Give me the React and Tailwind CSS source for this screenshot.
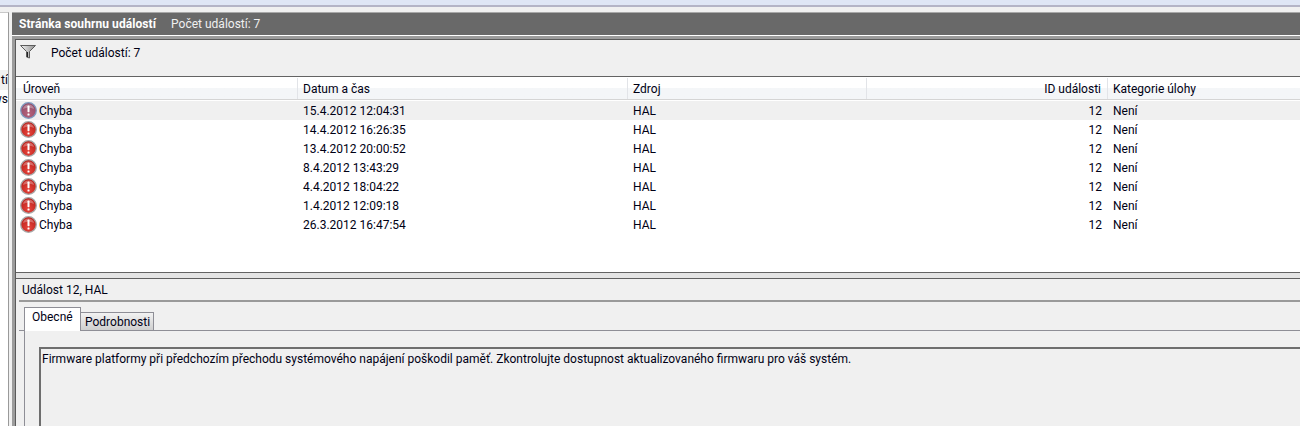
const font = { fontFamily: 'Roboto, "Noto Sans", sans-serif' };

const rows = [
  ["15.4.2012 12:04:31", true],
  ["14.4.2012 16:26:35"],
  ["13.4.2012 20:00:52"],
  ["8.4.2012 13:43:29"],
  ["4.4.2012 18:04:22"],
  ["1.4.2012 12:09:18"],
  ["26.3.2012 16:47:54"],
];

const cols = "grid grid-cols-[282px_330px_239px_241px_1fr]";

function ErrorIcon({ selected }) {
  const id = selected ? "gs" : "gr";
  return (
    <svg width="17" height="17" viewBox="0 0 17 17" className="shrink-0">
      <defs>
        <radialGradient id={id} cx="50%" cy="70%" r="70%">
          <stop offset="0%" stopColor={selected ? "#b8627a" : "#e8453c"} />
          <stop offset="100%" stopColor={selected ? "#8c4a68" : "#b51d18"} />
        </radialGradient>
      </defs>
      <circle cx="8.5" cy="8.5" r="7.8" fill={`url(#${id})`} stroke={selected ? "#7f9cc0" : "#a8a8a8"} strokeWidth="1.3" />
      <path d="M3 7A5.6 5.6 0 0 1 14 7Q8.5 4.4 3 7Z" fill="#ffffff" opacity="0.3" />
      <rect x="7.5" y="3.5" width="2" height="6.8" rx="0.7" fill="#fff" />
      <rect x="7.5" y="11.5" width="2" height="2.1" rx="0.5" fill="#fff" />
    </svg>
  );
}

function FilterIcon() {
  return (
    <svg width="16" height="14" viewBox="0 0 16 14">
      <defs>
        <linearGradient id="fg" x1="0" y1="0" x2="1" y2="0">
          <stop offset="0%" stopColor="#f4f4f4" />
          <stop offset="100%" stopColor="#8e8e8e" />
        </linearGradient>
      </defs>
      <path d="M0.5 0.5H15.5L9.5 6.5V13L6.5 12V6.5Z" fill="url(#fg)" stroke="#5c5c5c" strokeWidth="1" />
      <path d="M7.5 7V12" stroke="#222" strokeWidth="1" />
    </svg>
  );
}

export default function App() {
  return (
    <div style={font} className="w-[1300px] h-[426px] overflow-hidden bg-[#f0f0f0] text-[12px] leading-[16px] text-[#000014] flex flex-col">
      <div className="h-[5px] bg-[#dfe6f5] shrink-0" />
      <div className="h-[2px] bg-[#b4b4c6] shrink-0" />
      <div className="flex-1 flex pt-[5px] min-h-0">
        <div className="w-[9px] shrink-0 bg-white border-r border-[#9a9a9a] border-t border-t-[#c8c8c8] overflow-hidden flex flex-col items-end pt-[57px]">
          <div className="h-[20px] w-full bg-[#f0f0f0] flex justify-end items-center whitespace-nowrap">tí</div>
          <div className="h-[18px] flex items-center whitespace-nowrap">ws</div>
        </div>
        <div className="w-[3px] shrink-0 bg-[#f0f0f0]" />
        <div className="flex-1 min-w-0 flex flex-col">
          <div className="h-[23px] shrink-0 bg-[#696969] border-t border-[#a8a8a8] flex items-center pl-[7px] text-white">
            <span className="font-bold tracking-[0.08px]">Stránka souhrnu událostí</span>
            <span className="ml-[15px] text-[#f0f0f0]">Počet událostí: 7</span>
          </div>
          <div className="h-px bg-white shrink-0" />
          <div className="flex-1 min-h-0 flex flex-col bg-[#9c9c9c] pt-[3px] pl-[3px]">
            <div className="flex-1 min-h-0 flex flex-col bg-[#f0f0f0] border-t border-l border-[#5a5a5a]">
              <div className="h-[36px] shrink-0 flex items-start pl-[4px] pt-[5px]">
                <FilterIcon />
                <span className="ml-[15px]">Počet událostí: 7</span>
              </div>
              <div className="h-[197px] shrink-0 bg-white border-t border-b border-[#636363] flex flex-col">
                <div className={`${cols} h-[23px] pt-[1px] border-b border-[#d5d5d5] bg-gradient-to-b from-white from-50% to-[#f4f6f8] to-50% shrink-0`}>
                  <div className="pl-[7px] border-r border-[#e2e4e8] flex items-center">Úroveň</div>
                  <div className="pl-[5px] border-r border-[#e2e4e8] flex items-center">Datum a čas</div>
                  <div className="pl-[5px] border-r border-[#e2e4e8] flex items-center">Zdroj</div>
                  <div className="pr-[6px] border-r border-[#e2e4e8] flex items-center justify-end">ID události</div>
                  <div className="pl-[5px] flex items-center">Kategorie úlohy</div>
                </div>
                <div className="h-px shrink-0" />
                {rows.map(([date, selected]) => (
                  <div key={date} className={`${cols} h-[19px] items-center shrink-0 ${selected ? "bg-[#f0f0f0]" : ""}`}>
                    <div className="pl-[4px] flex items-center gap-[2px]">
                      <ErrorIcon selected={selected} />
                      <span>Chyba</span>
                    </div>
                    <div className="pl-[5px]">{date}</div>
                    <div className="pl-[5px]">HAL</div>
                    <div className="pr-[6px] text-right">12</div>
                    <div className="pl-[5px]">Není</div>
                  </div>
                ))}
              </div>
              <div className="h-[5px] shrink-0 bg-[#e4e4e4]" />
              <div className="flex-1 min-h-0 border-t border-[#5f5f5f] pl-[3px] flex flex-col">
                <div className="h-[21px] shrink-0 flex items-center pl-[3px]">Událost 12, HAL</div>
                <div className="h-[2px] shrink-0 bg-[#9a9a9a]" />
                <div className="flex items-end pl-[5px] h-[29px] shrink-0 border-b border-[#8e8e96] -mb-px relative">
                  <div className="relative z-10 h-[24px] w-[57px] bg-white border border-b-0 border-[#8e8e96] pl-[7px] -mb-px pt-[1px] flex items-start">Obecné</div>
                  <div className="h-[19px] w-[73px] bg-gradient-to-b from-[#f2f2f2] to-[#cfcfcf] border border-l-0 border-[#8e8e96] flex items-center pl-[4px] -mb-px">Podrobnosti</div>
                </div>
                <div className="flex-1 min-h-0 ml-[5px] border-l border-[#8e8e96] bg-[#f0f0f0] border-t border-t-[#8e8e96] pt-[16px] pl-[14px]">
                  <div className="h-[200px] border-t-2 border-l-2 border-[#6e6e6e] pl-[1px] pt-[2px] whitespace-nowrap">
                    Firmware platformy při předchozím přechodu systémového napájení poškodil paměť. Zkontrolujte dostupnost aktualizovaného firmwaru pro váš systém.
                  </div>
                </div>
              </div>
            </div>
          </div>
        </div>
      </div>
    </div>
  );
}
